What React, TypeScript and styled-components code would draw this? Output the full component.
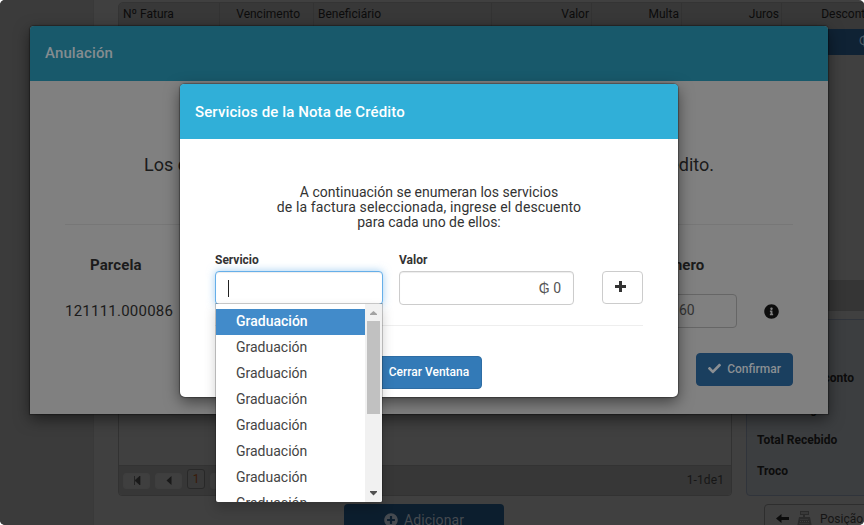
import React from "react";
import styled, { createGlobalStyle } from "styled-components";
import { FaCheck, FaInfoCircle, FaPlusCircle } from "react-icons/fa";

const GlobalStyle = createGlobalStyle`
  * { box-sizing: border-box; }
  html, body { margin: 0; background: #fff; overflow: hidden; }
  body { font-family: Roboto, "Liberation Sans", sans-serif; font-size: 12px; }
`;

const Page = styled.div`
  position: relative;
  display: flex;
  width: 864px;
  height: 525px;
  overflow: hidden;
  border-radius: 5px;
  background: #404040;
  color: #0c0c0c;
`;

const Sidebar = styled.aside`
  flex: 0 0 94px;
  background: #3b3b3b;
  border-right: 1px solid #393939;
`;

const Main = styled.main`
  display: flex;
  flex-direction: column;
  flex: 0 0 900px;
  padding: 2px 0 0 24px;
`;

const InvoiceTable = styled.section`
  display: flex;
  flex-direction: column;
  flex: 0 0 309px;
  border: 1px solid #343434;
  border-radius: 5px 0 0 0;
  overflow: hidden;
`;

const TableHead = styled.div`
  display: flex;
  flex: 0 0 26px;
  background: #383838;
`;

const HeadCell = styled.div<{ $width: number; $align?: string; $inset?: number }>`
  flex: 0 0 ${(p) => p.$width}px;
  padding: 0 ${(p) => p.$inset ?? 1}px 0 4px;
  border-right: 1px solid #333;
  line-height: 22px;
  text-align: ${(p) => p.$align ?? "left"};
`;

const SelectedRow = styled.div`
  display: flex;
  flex: 0 0 26px;
  padding: 0 0 0 740px;
  background: #0f2234;
  color: #4e5963;
  line-height: 24px;
`;

const TableFoot = styled.div`
  flex: 0 0 30px;
  margin-top: auto;
  background: #353535;
`;

const Panels = styled.div`
  display: flex;
  flex: 0 0 177px;
  gap: 14px;
  margin-top: 8px;
`;

const ListPanel = styled.section`
  display: flex;
  flex-direction: column;
  justify-content: flex-end;
  flex: 0 0 614px;
  border: 1px solid #323232;
  border-radius: 4px;
`;

const Pager = styled.div`
  display: flex;
  align-items: center;
  gap: 5px;
  height: 30px;
  padding: 0 7px 0 4px;
  border-top: 1px solid #333;
  background: #373737;
  border-radius: 0 0 4px 4px;
`;

const PagerButton = styled.span<{ $active?: boolean }>`
  display: flex;
  align-items: center;
  justify-content: center;
  width: ${(p) => (p.$active ? 18 : 27)}px;
  height: ${(p) => (p.$active ? 20 : 16)}px;
  margin-top: ${(p) => (p.$active ? -3 : 0)}px;
  border-radius: 3px;
  border: 1px solid ${(p) => (p.$active ? "#292929" : "#3e3e3e")};
  background: ${(p) => (p.$active ? "#393939" : "#3f3f3f")};
  color: ${(p) => (p.$active ? "#391b08" : "#191919")};
`;

const PagerInfo = styled.span`
  margin: -1px 0 0 auto;
  color: #161616;
  letter-spacing: 0.1px;
`;

const TotalsPanel = styled.section`
  flex: 0 0 200px;
  padding: 43px 0 0 10px;
  border: 1px solid #30343b;
  border-radius: 4px;
  background: #3c3e40;
`;

const TotalLine = styled.div`
  height: 31px;
  line-height: 31px;
  font-weight: 700;
  white-space: pre;
`;

const Actions = styled.div`
  display: flex;
  gap: 260px;
  margin: 8px 0 0 226px;
`;

const AddButton = styled.button`
  display: flex;
  align-items: center;
  justify-content: center;
  gap: 6px;
  width: 160px;
  height: 33px;
  padding: 0 0 2px;
  border: 0;
  border-radius: 4px;
  background: #0c1e2e;
  color: #454a50;
  font: 400 14px Roboto, sans-serif;
  letter-spacing: 0.1px;
`;

const PositionButton = styled.button`
  display: flex;
  align-items: center;
  gap: 7px;
  width: 140px;
  height: 33px;
  padding: 0 0 4px 11px;
  border: 1px solid #2e2e2e;
  border-radius: 4px;
  background: #404040;
  color: #151515;
  font: 400 12px Roboto, sans-serif;
`;

const Dialog = styled.div<{ $front?: boolean }>`
  position: absolute;
  left: ${(p) => (p.$front ? 180 : 30)}px;
  top: ${(p) => (p.$front ? 84 : 26)}px;
  width: ${(p) => (p.$front ? 498 : 798)}px;
  height: ${(p) => (p.$front ? 313 : 388)}px;
  border-radius: ${(p) => (p.$front ? "5px" : "4px 4px 0 0")};
  background: ${(p) => (p.$front ? "#fff" : "#808080")};
  color: ${(p) => (p.$front ? "#333" : "#1b1b1b")};
  box-shadow: 0 0 1px 1px rgba(0, 0, 0, 0.3), 0 5px 15px rgba(0, 0, 0, 0.5);
`;

const DialogHeader = styled.header<{ $front?: boolean }>`
  height: 55px;
  padding-left: 15px;
  border-radius: 4px 4px 0 0;
  background: ${(p) => (p.$front ? "#30afd8" : "#18596b")};
  color: ${(p) => (p.$front ? "#fff" : "#848c90")};
  font-size: 15px;
  font-weight: 500;
  letter-spacing: 0.12px;
  line-height: ${(p) => (p.$front ? 57 : 55)}px;
`;

const BackBody = styled.div`
  display: flex;
  flex-direction: column;
  padding: 0 35px;
`;

const Notice = styled.p`
  display: flex;
  justify-content: space-between;
  width: 570px;
  margin: 70px auto 0;
  font-size: 18px;
  line-height: 28px;
`;

const Divider = styled.div<{ $front?: boolean }>`
  height: 1px;
  background: ${(p) => (p.$front ? "#eee" : "#777")};
  margin-top: ${(p) => (p.$front ? 20 : 45)}px;
`;

const Columns = styled.div`
  display: flex;
  justify-content: space-between;
  margin-top: 30px;
`;

const ParcelColumn = styled.div`
  width: 110px;
`;

const ColumnTitle = styled.div<{ $indent: number }>`
  padding-left: ${(p) => p.$indent}px;
  font-size: 15px;
  font-weight: 700;
  letter-spacing: 0.1px;
  line-height: 20px;
`;

const ParcelCode = styled.div`
  margin-top: 26px;
  font-size: 15px;
  line-height: 20px;
  letter-spacing: 0.23px;
`;

const NumberColumn = styled.div`
  width: 158px;
`;

const NumberRow = styled.div`
  display: flex;
  align-items: center;
  justify-content: space-between;
  width: 144px;
  margin-top: 19px;
`;

const NumberInput = styled.div`
  width: 102px;
  height: 34px;
  padding-left: 43px;
  border: 1px solid #666;
  border-radius: 4px;
  color: #343434;
  font-size: 14px;
  line-height: 31px;
`;

const ConfirmButton = styled.button`
  display: flex;
  align-items: center;
  justify-content: center;
  align-self: flex-end;
  gap: 6px;
  width: 97px;
  height: 33px;
  margin-top: 25px;
  padding: 0 0 2px;
  border: 1px solid #1a3e60;
  border-radius: 4px;
  background: #1a3f5f;
  color: #8b8f93;
  font: 500 12px Roboto, sans-serif;
`;

const FrontBody = styled.div`
  padding: 46px 35px 0;
`;

const Instructions = styled.p`
  margin: 0;
  text-align: center;
  font-size: 14px;
  line-height: 15px;
`;

const WideLine = styled.span`
  letter-spacing: 0.13px;
`;

const Form = styled.div`
  display: grid;
  grid-template-columns: 168px 175px 41px;
  column-gap: 16px;
  margin-top: 20px;
  justify-content: start;
`;

const Field = styled.div`
  position: relative;
`;

const Label = styled.div`
  height: 21px;
  font-size: 12px;
  font-weight: 700;
  line-height: 21px;
`;

const Input = styled.div<{ $focus?: boolean }>`
  display: flex;
  align-items: center;
  justify-content: ${(p) => (p.$focus ? "flex-start" : "flex-end")};
  height: 34px;
  padding: 0 12px;
  border: 1px solid ${(p) => (p.$focus ? "#66afe9" : "#ccc")};
  border-radius: 4px;
  background: #fff;
  color: #555;
  font-size: 14px;
  box-shadow: inset 0 1px 1px rgba(0, 0, 0, 0.075)
    ${(p) => (p.$focus ? ", 0 0 8px rgba(102, 175, 233, 0.6)" : "")};
`;

const Caret = styled.span`
  width: 1px;
  height: 17px;
  background: #222;
`;

const AddService = styled.button`
  display: flex;
  align-items: center;
  justify-content: center;
  width: 41px;
  height: 33px;
  margin: 21px 0 0 12px;
  padding: 0 4px 2px 0;
  border: 1px solid #ccc;
  border-radius: 4px;
  background: #fff;
  color: #333;
`;

const Footer = styled.div`
  display: flex;
  justify-content: center;
  margin-top: 30px;
`;

const CloseButton = styled.button`
  width: 106px;
  height: 33px;
  padding: 0 0 2px;
  border: 1px solid #2e6da4;
  border-radius: 4px;
  background: #337ab7;
  color: #fff;
  font: 500 12px Roboto, sans-serif;
`;

const Dropdown = styled.div`
  position: absolute;
  z-index: 2;
  top: 53px;
  left: 0;
  display: flex;
  width: 168px;
  height: 200px;
  overflow: hidden;
  border: 1px solid rgba(0, 0, 0, 0.2);
  border-bottom-color: transparent;
  border-radius: 0 0 3px 3px;
  background: #fff;
  background-clip: padding-box;
  box-shadow: 0 6px 12px rgba(0, 0, 0, 0.175);
`;

const Options = styled.div`
  flex: 1;
  padding-top: 5px;
`;

const Option = styled.div<{ $selected?: boolean }>`
  height: 26px;
  padding-left: 20px;
  background: ${(p) => (p.$selected ? "#428bca" : "transparent")};
  color: ${(p) => (p.$selected ? "#fff" : "#444")};
  font-size: 14px;
  font-weight: ${(p) => (p.$selected ? 500 : 400)};
  line-height: 25px;
`;

const Scrollbar = styled.div`
  display: flex;
  flex-direction: column;
  align-items: center;
  width: 17px;
  background: #f1f1f1;
`;

const Thumb = styled.div`
  width: 13px;
  height: 93px;
  margin-bottom: auto;
  background: #c1c1c1;
`;

const ArrowIcon = styled.svg`
  flex-shrink: 0;
`;

const ScrollArrow = ({ down = false }: { down?: boolean }) => (
  <ArrowIcon width="17" height="17" viewBox="0 0 17 17">
    <path d={down ? "M5 6h7v1l-3.500 3.500L5 7z" : "M5 11h7v-1L8.500 7 5 10z"} fill={down ? "#505050" : "#a3a3a3"} />
  </ArrowIcon>
);

const CashRegister = () => (
  <svg width="17" height="17" viewBox="0 0 17 17">
    <path d="M4 1h9v4H9v2h5l2 10H1L3 7h4V5H4z" fill="#2b2b2b" />
    <path d="M5 3h7" stroke="#484848" />
    <path d="M4.500 9.500h8M4 11.500h9M3.500 13.500h10" stroke="#454545" strokeWidth=".8" strokeDasharray="1 1" />
  </svg>
);

const options = Array.from({ length: 8 }, () => "Graduación");

export default function App() {
  return (
    <>
      <GlobalStyle />
      <Page>
        <Sidebar />
        <Main>
          <InvoiceTable>
            <TableHead>
              <HeadCell $width={101}>Nº Fatura</HeadCell>
              <HeadCell $width={94} $align="right" $inset={13}>Vencimento</HeadCell>
              <HeadCell $width={178}>Beneficiário</HeadCell>
              <HeadCell $width={100} $align="right" $inset={2}>Valor</HeadCell>
              <HeadCell $width={90} $align="right" $inset={2}>Multa</HeadCell>
              <HeadCell $width={100} $align="right" $inset={2}>Juros</HeadCell>
              <HeadCell $width={93} $align="right" $inset={2}>Desconto</HeadCell>
            </TableHead>
            <SelectedRow>₲ 0</SelectedRow>
            <TableFoot />
          </InvoiceTable>
          <Panels>
            <ListPanel>
              <Pager>
                <PagerButton>
                  <svg width="8" height="9"><path d="M1.500 0v9M7 0v9L2 4.500z" fill="currentColor" stroke="currentColor" strokeWidth=".7" /></svg>
                </PagerButton>
                <PagerButton>
                  <svg width="6" height="9"><path d="M5.500 0v9L.5 4.500z" fill="currentColor" /></svg>
                </PagerButton>
                <PagerButton $active>1</PagerButton>
                <PagerButton />
                <PagerInfo>1-1de1</PagerInfo>
              </Pager>
            </ListPanel>
            <TotalsPanel>
              <TotalLine>Total de Desconto</TotalLine>
              <TotalLine>Total a Pagar</TotalLine>
              <TotalLine>Total Recebido</TotalLine>
              <TotalLine>Troco</TotalLine>
            </TotalsPanel>
          </Panels>
          <Actions>
            <AddButton><FaPlusCircle size={14} />Adicionar</AddButton>
            <PositionButton>
              <svg width="13" height="9"><path d="M0 4.500 5.500 0v3H13v3H5.500v3z" fill="#0c0c0c" /></svg>
              <CashRegister />
              Posição
            </PositionButton>
          </Actions>
        </Main>

        <Dialog>
          <DialogHeader>Anulación</DialogHeader>
          <BackBody>
            <Notice>
              <span>Los datos de la factura</span>
              <span>para la nota de crédito.</span>
            </Notice>
            <Divider />
            <Columns>
              <ParcelColumn>
                <ColumnTitle $indent={25}>Parcela</ColumnTitle>
                <ParcelCode>121111.000086</ParcelCode>
              </ParcelColumn>
              <NumberColumn>
                <ColumnTitle $indent={15}>Número</ColumnTitle>
                <NumberRow>
                  <NumberInput>60</NumberInput>
                  <FaInfoCircle size={15} color="#0d0d0d" />
                </NumberRow>
              </NumberColumn>
            </Columns>
            <ConfirmButton><FaCheck size={13} />Confirmar</ConfirmButton>
          </BackBody>
        </Dialog>

        <Dialog $front>
          <DialogHeader $front>Servicios de la Nota de Crédito</DialogHeader>
          <FrontBody>
            <Instructions>
              A continuación se enumeran los servicios<br />
              <WideLine>de la factura seleccionada, ingrese el descuento</WideLine><br />
              para cada uno de ellos:
            </Instructions>
            <Form>
              <Field>
                <Label>Servicio</Label>
                <Input $focus><Caret /></Input>
                <Dropdown>
                  <Options>
                    {options.map((name, i) => (
                      <Option key={i} $selected={i === 0}>{name}</Option>
                    ))}
                  </Options>
                  <Scrollbar>
                    <ScrollArrow />
                    <Thumb />
                    <ScrollArrow down />
                  </Scrollbar>
                </Dropdown>
              </Field>
              <Field>
                <Label>Valor</Label>
                <Input>₲ 0</Input>
              </Field>
              <AddService>
                <svg width="11" height="11"><path d="M4 0h3v4h4v3H7v4H4V7H0V4h4z" fill="currentColor" /></svg>
              </AddService>
            </Form>
            <Divider $front />
            <Footer><CloseButton>Cerrar Ventana</CloseButton></Footer>
          </FrontBody>
        </Dialog>
      </Page>
    </>
  );
}
